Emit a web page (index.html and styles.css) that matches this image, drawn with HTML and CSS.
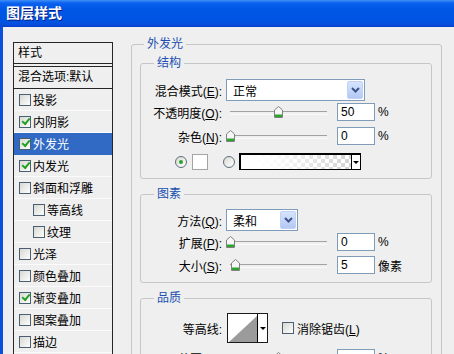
FILE: index.html
```html
<!DOCTYPE html>
<html lang="zh-CN">

<head>
    <meta charset="UTF-8">
    <title>图层样式</title>
    <link rel="stylesheet" href="styles.css">
</head>

<body>
    <div id="win">
        <div class="titlebar">图层样式</div>
        <div class="client">

            <div class="stylelist">
                <div class="list-head">样式</div>
                <div class="list-mix">混合选项:默认</div>
                <div class="item"><span class="chk"></span>投影</div>
                <div class="item"><span class="chk on"></span>内阴影</div>
                <div class="item sel"><span class="chk on"></span>外发光</div>
                <div class="item"><span class="chk on"></span>内发光</div>
                <div class="item"><span class="chk"></span>斜面和浮雕</div>
                <div class="item sub"><span class="chk"></span>等高线</div>
                <div class="item sub"><span class="chk"></span>纹理</div>
                <div class="item"><span class="chk"></span>光泽</div>
                <div class="item"><span class="chk"></span>颜色叠加</div>
                <div class="item"><span class="chk on"></span>渐变叠加</div>
                <div class="item"><span class="chk"></span>图案叠加</div>
                <div class="item"><span class="chk"></span>描边</div>
            </div>

            <fieldset class="panel">
                <legend>外发光</legend>

                <fieldset class="group group-structure">
                    <legend>结构</legend>
                    <div class="row row-blend">
                        <span class="lbl">混合模式(<u>E</u>):</span>
                        <div class="select select-blend">
                            <span class="val">正常</span>
                            <span class="dropbtn"><svg width="9" height="6" viewBox="0 0 9 6"><path d="M1 1 L4.5 4.5 L8 1" fill="none" stroke="#3c5488" stroke-width="2"/></svg></span>
                        </div>
                    </div>
                    <div class="row row-opacity">
                        <span class="lbl">不透明度(<u>O</u>):</span>
                        <div class="slider">
                            <span class="thumb" style="left:48px"><svg width="9" height="12" viewBox="0 0 9 12"><path d="M0.5 4 L4.5 0.5 L8.5 4 V11.5 H0.5 Z" fill="#f6f6f6" stroke="#808080"/><path d="M1 8.5 H8 V11 H1 Z" fill="#2ca52c"/></svg></span>
                        </div>
                        <span class="num">50</span><span class="unit">%</span>
                    </div>
                    <div class="row row-noise">
                        <span class="lbl">杂色(<u>N</u>):</span>
                        <div class="slider">
                            <span class="thumb" style="left:0px"><svg width="9" height="12" viewBox="0 0 9 12"><path d="M0.5 4 L4.5 0.5 L8.5 4 V11.5 H0.5 Z" fill="#f6f6f6" stroke="#808080"/><path d="M1 8.5 H8 V11 H1 Z" fill="#2ca52c"/></svg></span>
                        </div>
                        <span class="num">0</span><span class="unit">%</span>
                    </div>
                    <div class="row row-color">
                        <span class="radio on"></span>
                        <span class="swatch"></span>
                        <span class="radio radio-grad"></span>
                        <div class="gradpick">
                            <span class="grad"></span>
                            <span class="arrow"><span class="tri"></span></span>
                        </div>
                    </div>
                </fieldset>

                <fieldset class="group group-elements">
                    <legend>图素</legend>
                    <div class="row row-technique">
                        <span class="lbl">方法(<u>Q</u>):</span>
                        <div class="select select-technique">
                            <span class="val">柔和</span>
                            <span class="dropbtn"><svg width="9" height="6" viewBox="0 0 9 6"><path d="M1 1 L4.5 4.5 L8 1" fill="none" stroke="#3c5488" stroke-width="2"/></svg></span>
                        </div>
                    </div>
                    <div class="row row-spread">
                        <span class="lbl">扩展(<u>P</u>):</span>
                        <div class="slider">
                            <span class="thumb" style="left:0px"><svg width="9" height="12" viewBox="0 0 9 12"><path d="M0.5 4 L4.5 0.5 L8.5 4 V11.5 H0.5 Z" fill="#f6f6f6" stroke="#808080"/><path d="M1 8.5 H8 V11 H1 Z" fill="#2ca52c"/></svg></span>
                        </div>
                        <span class="num">0</span><span class="unit">%</span>
                    </div>
                    <div class="row row-size">
                        <span class="lbl">大小(<u>S</u>):</span>
                        <div class="slider">
                            <span class="thumb" style="left:5px"><svg width="9" height="12" viewBox="0 0 9 12"><path d="M0.5 4 L4.5 0.5 L8.5 4 V11.5 H0.5 Z" fill="#f6f6f6" stroke="#808080"/><path d="M1 8.5 H8 V11 H1 Z" fill="#2ca52c"/></svg></span>
                        </div>
                        <span class="num">5</span><span class="unit">像素</span>
                    </div>
                </fieldset>

                <fieldset class="group group-quality">
                    <legend>品质</legend>
                    <div class="row row-contour">
                        <span class="lbl">等高线:</span>
                        <div class="contour">
                            <span class="curve"><svg width="29" height="28" viewBox="0 0 29 28"><path d="M1 28 L29 2 V28 Z" fill="#9b9b9b"/></svg></span>
                            <span class="arrow"><span class="tri"></span></span>
                        </div>
                        <span class="chk aa"></span><span class="chk-text">消除锯齿(<u>L</u>)</span>
                    </div>
                    <div class="row row-range">
                        <span class="lbl">范围(<u>R</u>):</span>
                        <div class="slider">
                            <span class="thumb" style="left:48px"><svg width="9" height="12" viewBox="0 0 9 12"><path d="M0.5 4 L4.5 0.5 L8.5 4 V11.5 H0.5 Z" fill="#f6f6f6" stroke="#808080"/><path d="M1 8.5 H8 V11 H1 Z" fill="#2ca52c"/></svg></span>
                        </div>
                        <span class="num"></span><span class="unit">%</span>
                    </div>
                </fieldset>
            </fieldset>

        </div>
    </div>
</body>

</html>
```

FILE: styles.css
```css
* {
    box-sizing: border-box;
}

html,
body {
    margin: 0;
    padding: 0;
}

body {
    width: 454px;
    height: 354px;
    overflow: hidden;
    background-color: #efefef;
    font-family: "Liberation Sans", "Noto Sans CJK SC", sans-serif;
    font-size: 12px;
    color: #000;
}

#win {
    width: 454px;
}

.titlebar {
    height: 27px;
    padding-left: 6px;
    line-height: 27px;
    color: #fff;
    font-size: 14px;
    font-weight: bold;
    text-shadow: 1px 1px 0 #0a1e80;
    background: linear-gradient(#3d8ff7 0, #0b62ef 3px, #0056e6 9px, #0054e3 20px, #0450df 24px, #0a3ecb 27px);
}

.client {
    display: flex;
    align-items: flex-start;
    height: 327px;
    padding: 9px 0 0 10px;
    border-left: 3px solid #0b4fdc;
    background-color: #efefef;
}

/* left style list */

.stylelist {
    margin-top: 6px;
    width: 100px;
    height: 330px;
    border: 1px solid #262626;
    flex-shrink: 0;
}

.list-head {
    height: 21px;
    line-height: 20px;
    padding-left: 4px;
    border-bottom: 1px solid #262626;
    margin-bottom: 2px;
}

.list-mix {
    height: 23px;
    line-height: 21px;
    padding-left: 4px;
    border-top: 1px solid #262626;
    border-bottom: 1px solid #262626;
}

.item {
    display: flex;
    align-items: center;
    height: 22px;
    padding-left: 5px;
    border-bottom: 1px solid #fbfbfb;
}

.item.sub {
    padding-left: 19px;
}

.item.sel {
    background-color: #316ac5;
    border-bottom-color: #316ac5;
    color: #fff;
}

.chk {
    position: relative;
    width: 12px;
    height: 12px;
    margin-right: 2px;
    border: 1px solid #4a5e74;
    background: linear-gradient(135deg, #d8d8d2, #fdfdfd);
    flex-shrink: 0;
}

.chk.on::after {
    content: '';
    position: absolute;
    left: 2px;
    top: 1px;
    width: 6px;
    height: 3px;
    border-left: 2px solid #21a121;
    border-bottom: 2px solid #21a121;
    transform: rotate(-50deg);
}

/* right panel */

fieldset {
    margin: 0;
    min-width: 0;
    border: 1px solid #c6c6c6;
    border-radius: 3px;
}

legend {
    padding: 0 3px;
    line-height: 16px;
    color: #2150b0;
}

.panel {
    width: 311px;
    height: 340px;
    margin-left: 18px;
    padding: 3px 9px 0 8px;
}

.panel > legend {
    margin-left: 4px;
}

.group {
    padding: 0 0 8px 0;
}

.group > legend {
    margin-left: 13px;
}

.group-elements,
.group-quality {
    margin-top: 7px;
}

.row {
    display: flex;
    align-items: center;
}

.lbl {
    width: 81px;
    margin-right: 4px;
    text-align: right;
    white-space: nowrap;
}

.row-blend {
    margin-top: 8px;
    height: 22px;
}

.row-opacity {
    margin-top: 2px;
    height: 18px;
}

.row-noise {
    margin-top: 6px;
    height: 18px;
}

.row-color {
    margin-top: 8px;
    height: 17px;
    padding-left: 34px;
}

.row-technique {
    margin-top: 7px;
    height: 22px;
}

.row-spread {
    margin-top: 2px;
    height: 18px;
}

.row-size {
    margin-top: 5px;
    height: 18px;
}

.row-contour {
    margin-top: 7px;
    height: 30px;
}

.row-range {
    margin-top: 6px;
    height: 18px;
}

.select {
    display: flex;
    align-items: center;
    height: 22px;
    padding: 0 1px 0 6px;
    border: 1px solid #7f9db9;
    background-color: #fff;
}

.select .val {
    flex: 1;
}

.select-blend {
    width: 139px;
}

.select-technique {
    width: 72px;
}

.dropbtn {
    display: flex;
    align-items: center;
    justify-content: center;
    width: 16px;
    height: 18px;
    border: 1px solid #bfd1f7;
    border-radius: 2px;
    background: linear-gradient(#d7e4fd, #b3c8f4);
}

.slider {
    position: relative;
    width: 107px;
    height: 18px;
}

.slider::before {
    content: '';
    position: absolute;
    left: 4px;
    right: 6px;
    top: 8px;
    height: 2px;
    border-top: 1px solid #a2a2a2;
    border-bottom: 1px solid #fafafa;
}

.thumb {
    position: absolute;
    top: 3px;
    width: 9px;
    height: 12px;
    display: flex;
}

.num {
    width: 38px;
    height: 18px;
    margin-left: 4px;
    padding-left: 3px;
    line-height: 16px;
    border: 1px solid #7f9db9;
    background-color: #fff;
}

.unit {
    margin-left: 3px;
}

.radio {
    position: relative;
    width: 12px;
    height: 12px;
    border: 1px solid #5d6e80;
    border-radius: 50%;
    background: linear-gradient(135deg, #d9d9d3, #fff);
    flex-shrink: 0;
}

.radio.on::after {
    content: '';
    position: absolute;
    left: 3px;
    top: 3px;
    width: 4px;
    height: 4px;
    border-radius: 50%;
    background-color: #2aa42a;
}

.radio-grad {
    margin-left: 15px;
}

.swatch {
    width: 16px;
    height: 16px;
    margin-left: 5px;
    border: 1px solid #a4a4a4;
    background-color: #fff;
}

.gradpick {
    display: flex;
    width: 122px;
    height: 17px;
    margin-left: 4px;
    border: 1px solid #000;
    border-width: 2px 1px 1px 2px;
}

.grad {
    flex: 1;
    background:
        linear-gradient(to right, #fff 0%, rgba(255, 255, 255, 0.9) 30%, rgba(255, 255, 255, 0) 100%),
        repeating-conic-gradient(#d2d2d2 0 25%, #fff 0 50%) 0 0 / 8px 8px;
}

.arrow {
    display: flex;
    align-items: center;
    justify-content: center;
    width: 9px;
    border-left: 1px solid #000;
    background-color: #fff;
}

.tri {
    width: 0;
    height: 0;
    border-left: 3px solid transparent;
    border-right: 3px solid transparent;
    border-top: 3px solid #000;
}

.contour {
    display: flex;
    width: 41px;
    height: 30px;
    margin-left: 1px;
    border: 1px solid #1a1a1a;
    background-color: #fff;
}

.curve {
    display: flex;
    width: 30px;
}

.contour .arrow {
    width: 10px;
}

.chk.aa {
    margin-left: 14px;
    margin-right: 3px;
}
```
